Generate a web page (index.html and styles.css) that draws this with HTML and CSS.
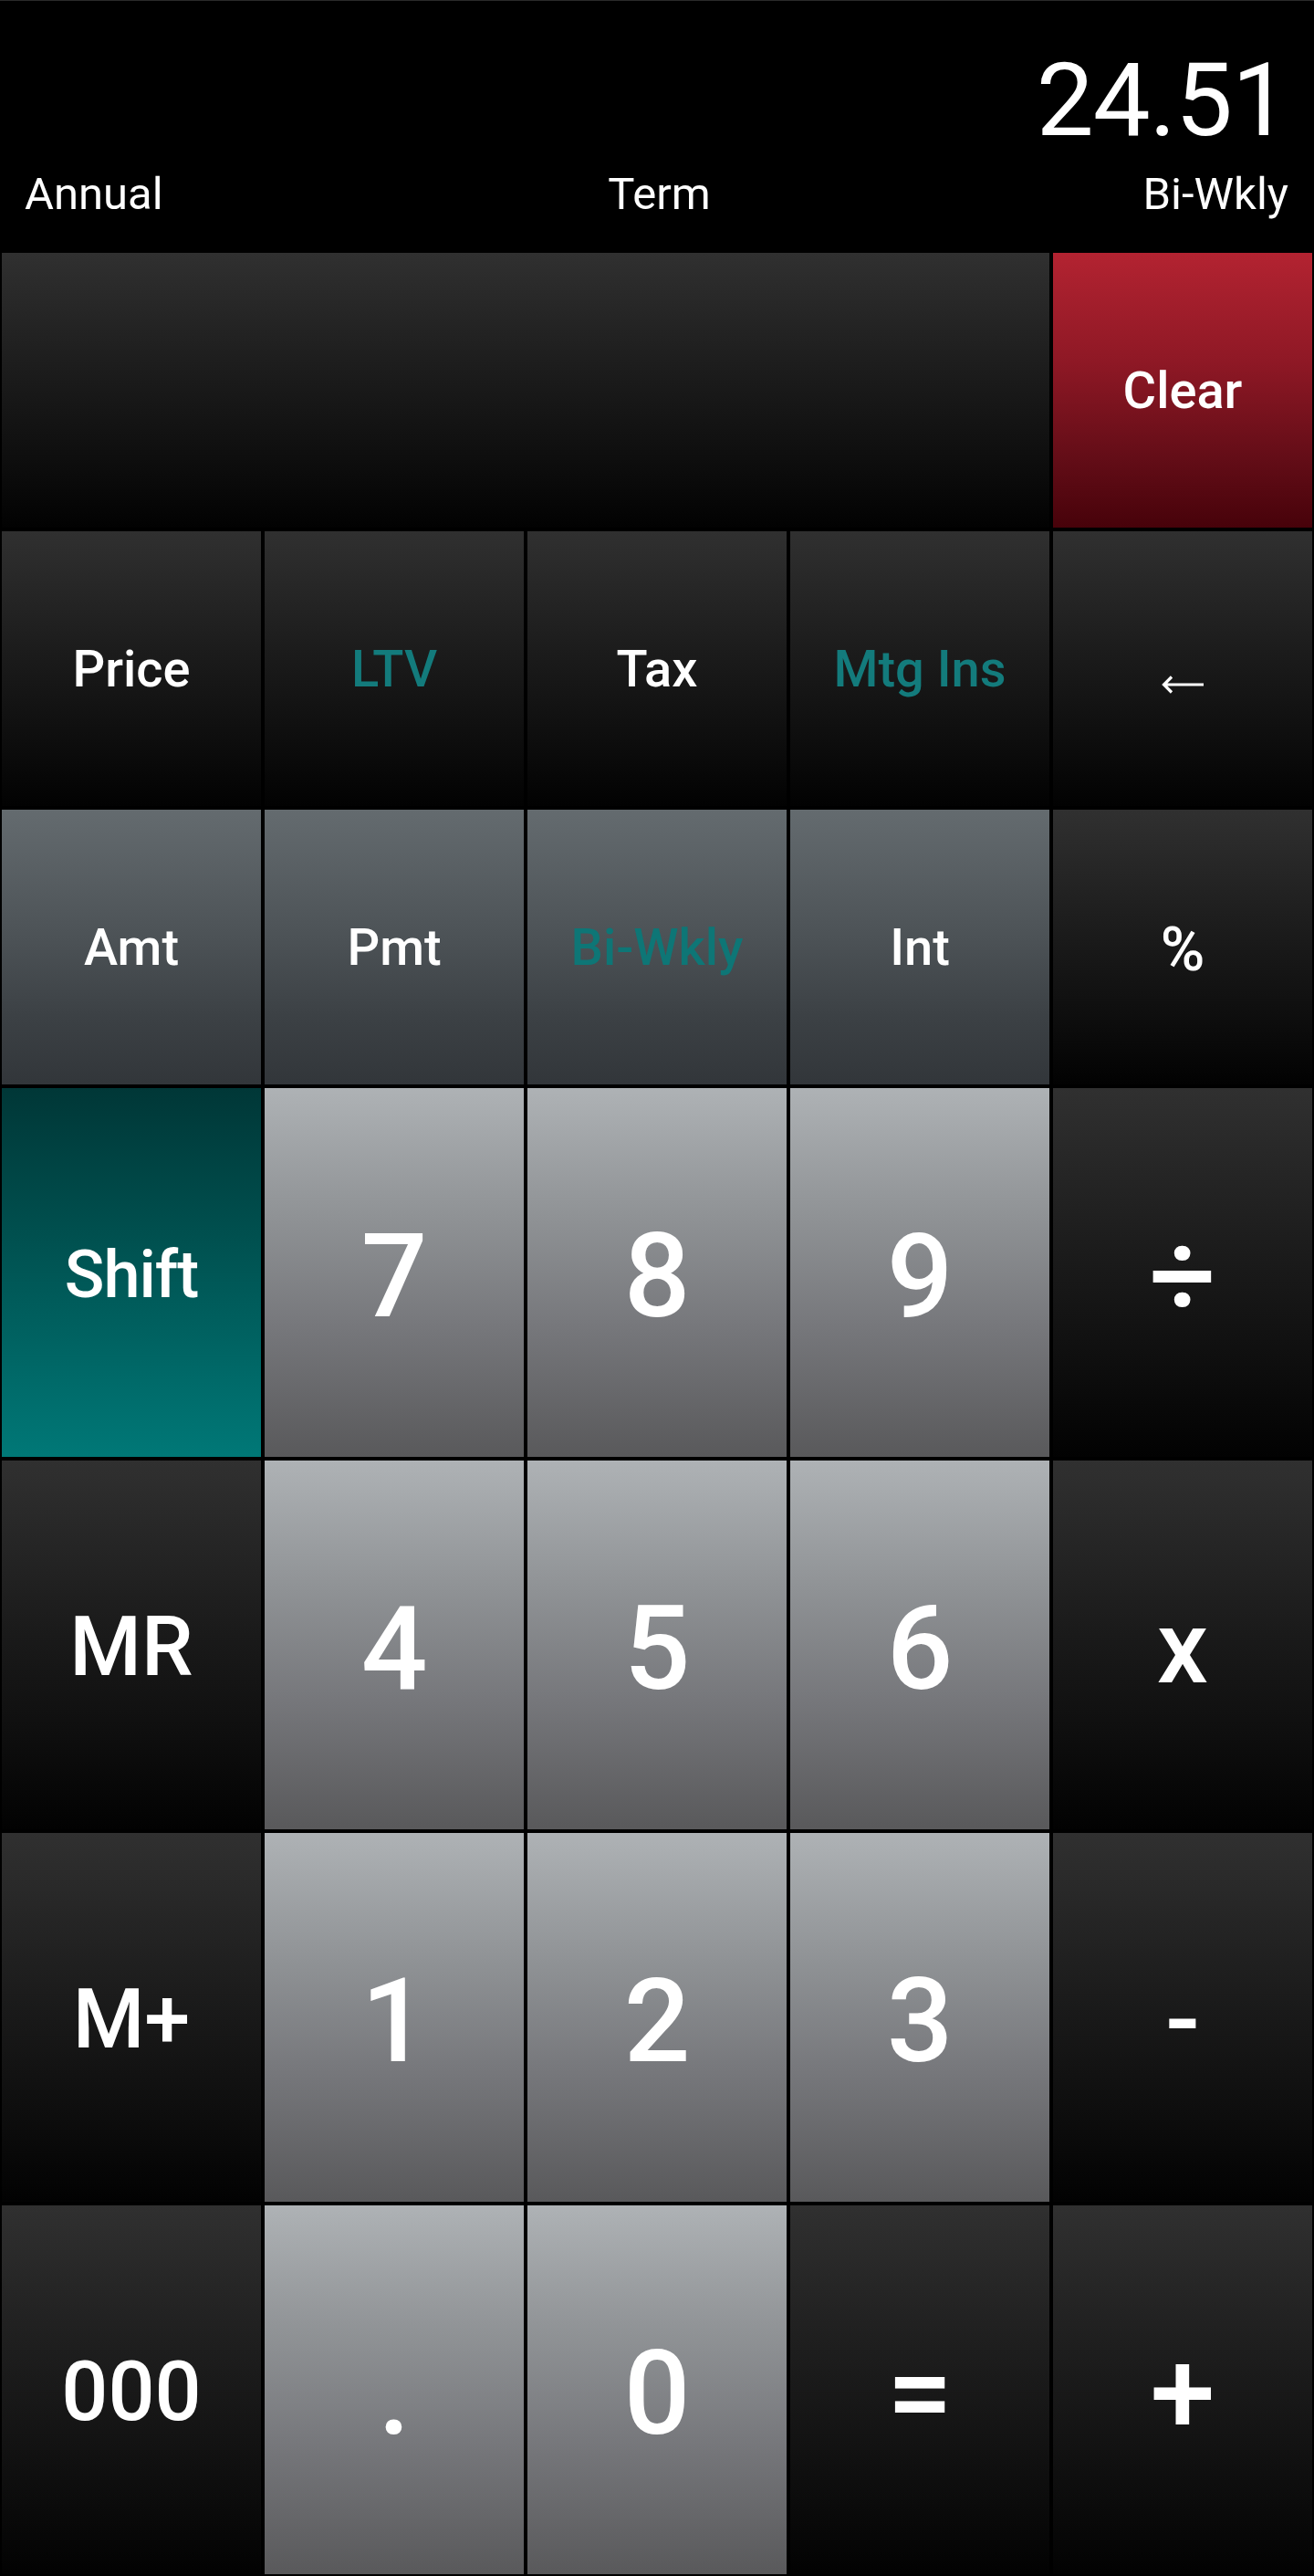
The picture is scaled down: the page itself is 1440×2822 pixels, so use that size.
FILE: index.html
```html
<!DOCTYPE html>
<html lang="en">
<head>
<meta charset="utf-8">
<title>Mortgage Calculator</title>
<link rel="stylesheet" href="styles.css">
</head>
<body>
<div class="app">
  <header class="display">
    <div class="value">24.51</div>
    <div class="labels">
      <span class="lbl lbl-left">Annual</span>
      <span class="lbl lbl-mid">Term</span>
      <span class="lbl lbl-right">Bi-Wkly</span>
    </div>
  </header>
  <main class="keypad">
    <div class="key dark panel"></div>
    <div class="key red small">Clear</div>

    <div class="key dark small">Price</div>
    <div class="key dark small teal-text">LTV</div>
    <div class="key dark small">Tax</div>
    <div class="key dark small teal-text">Mtg Ins</div>
    <div class="key dark small arrow-key">
      <svg class="arrow" width="48" height="22" viewBox="0 0 48 22"><path d="M47 11 H4 M12 2.5 L3.5 11 L12 19.5" fill="none" stroke="#fff" stroke-width="3.2"/></svg>
    </div>

    <div class="key slate small">Amt</div>
    <div class="key slate small">Pmt</div>
    <div class="key slate small teal-text">Bi-Wkly</div>
    <div class="key slate small">Int</div>
    <div class="key dark pct">%</div>

    <div class="key shift">Shift</div>
    <div class="key num">7</div>
    <div class="key num">8</div>
    <div class="key num">9</div>
    <div class="key dark op">÷</div>

    <div class="key dark mem">MR</div>
    <div class="key num">4</div>
    <div class="key num">5</div>
    <div class="key num">6</div>
    <div class="key dark op opx">x</div>

    <div class="key dark mem">M+</div>
    <div class="key num">1</div>
    <div class="key num">2</div>
    <div class="key num">3</div>
    <div class="key dark op opx">-</div>

    <div class="key dark mem">000</div>
    <div class="key num">.</div>
    <div class="key num">0</div>
    <div class="key dark op">=</div>
    <div class="key dark op">+</div>
  </main>
</div>
</body>
</html>
```

FILE: styles.css
```css
* { box-sizing: border-box; }
html, body {
  margin: 0;
  padding: 0;
  background: #000;
}
body {
  font-family: Roboto, "Noto Sans", "Liberation Sans", sans-serif;
  color: #fff;
  width: 1440px;
  height: 2822px;
  overflow: hidden;
}
.app {
  display: flex;
  flex-direction: column;
  height: 2822px;
}
.display {
  height: 275px;
  border-top: 1px solid #2a2a2a;
  display: flex;
  flex-direction: column;
  padding: 0 28px 0 27px;
}
.value {
  margin-top: 53px;
  align-self: flex-end;
  font-size: 112px;
  line-height: 112px;
  font-weight: 400;
  letter-spacing: -1px;
  margin-right: 0;
}
.labels {
  margin-top: 22px;
  display: grid;
  grid-template-columns: 1fr auto 1fr;
  font-size: 49px;
  line-height: 49px;
  font-weight: 400;
}
.lbl-left { justify-self: start; }
.lbl-mid { justify-self: center; padding-left: 6px; }
.lbl-right { justify-self: end; }

.keypad {
  flex: 1;
  display: grid;
  grid-template-columns: repeat(5, 1fr);
  grid-template-rows: repeat(3, 301px) repeat(4, 404px);
  gap: 4px;
  padding: 2px;
}
.key {
  display: flex;
  align-items: center;
  justify-content: center;
  color: #fff;
  font-weight: 500;
  line-height: 1;
}
.panel { grid-column: span 4; }
.dark {
  background: linear-gradient(180deg, #303030 0%, #1b1b1b 45%, #0e0e0e 75%, #020202 100%);
}
.red {
  background: linear-gradient(180deg, #b32331 0%, #8e1825 40%, #630d17 75%, #47020a 100%);
}
.slate {
  background: linear-gradient(180deg, #646b6f 0%, #4d5357 45%, #3c4145 75%, #32363a 100%);
}
.num {
  background: linear-gradient(180deg, #aeb2b5 0%, #8f9295 35%, #76777b 65%, #59595b 100%);
  font-size: 128px;
  padding-top: 8px;
}
.shift {
  background: linear-gradient(180deg, #003737 0%, #00504f 40%, #006766 75%, #007877 100%);
  font-size: 72px;
  letter-spacing: -1px;
  padding-top: 6px;
}
.small { font-size: 56px; }
.teal-text { color: #137b7c; }
.slate.teal-text { color: #0e7676; }
.arrow { margin-top: 34px; }
.pct { font-size: 66px; padding-top: 6px; }
.mem { font-size: 90px; padding-top: 6px; }
.op { font-size: 128px; padding-top: 6px; }
.opx { font-size: 112px; }
```
